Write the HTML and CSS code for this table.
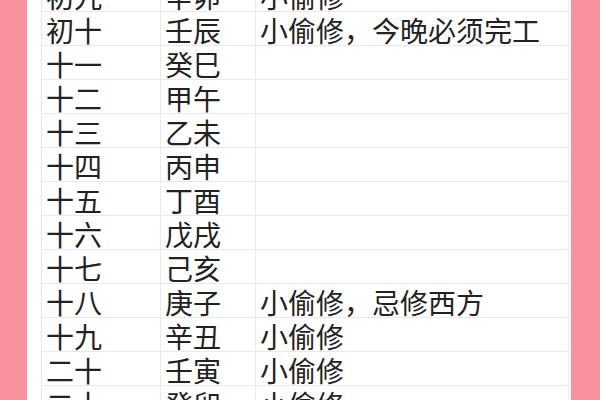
FILE: index.html
```html
<!DOCTYPE html>
<html lang="zh">
<head>
<meta charset="utf-8">
<link rel="stylesheet" href="styles.css">
</head>
<body>
<div class="page">
  <div class="sheet">
    <table class="grid">
      <colgroup><col class="c1"><col class="c2"><col class="c3"></colgroup>
      <tr><td>初九</td><td>辛卯</td><td>小偷修</td></tr>
      <tr><td>初十</td><td>壬辰</td><td>小偷修，今晚必须完工</td></tr>
      <tr><td>十一</td><td>癸巳</td><td></td></tr>
      <tr><td>十二</td><td>甲午</td><td></td></tr>
      <tr><td>十三</td><td>乙未</td><td></td></tr>
      <tr><td>十四</td><td>丙申</td><td></td></tr>
      <tr><td>十五</td><td>丁酉</td><td></td></tr>
      <tr><td>十六</td><td>戊戌</td><td></td></tr>
      <tr><td>十七</td><td>己亥</td><td></td></tr>
      <tr><td>十八</td><td>庚子</td><td>小偷修，忌修西方</td></tr>
      <tr><td>十九</td><td>辛丑</td><td>小偷修</td></tr>
      <tr><td>二十</td><td>壬寅</td><td>小偷修</td></tr>
      <tr><td>二十一</td><td>癸卯</td><td>小偷修</td></tr>
    </table>
  </div>
</div>
</body>
</html>
```

FILE: styles.css
```css
html, body {
  margin: 0;
  padding: 0;
  width: 600px;
  height: 400px;
  overflow: hidden;
  background: #f8929f;
}
.page {
  display: flex;
  justify-content: flex-start;
  height: 400px;
  padding-left: 27px;
}
.sheet {
  width: 544px;
  height: 400px;
  background: #ffffff;
  overflow: hidden;
  padding-left: 14px;
  padding-right: 3px;
  box-sizing: border-box;
}
.grid {
  margin-top: -23px;
  border-collapse: collapse;
  width: 527px;
  table-layout: fixed;
  font-family: "Noto Sans CJK SC", "Noto Sans", sans-serif;
  font-size: 28px;
  color: #222222;
}
.c1 { width: 119px; }
.c2 { width: 95px; }
.c3 { width: 313px; }
.grid td {
  height: 32.6px;
  padding: 0 0 0 4px;
  border: 1px solid #e9e9e9;
  line-height: 30px;
  white-space: nowrap;
  vertical-align: middle;
  padding-top: 3px;
  box-sizing: border-box;
}
.grid td:last-child {
  border-right: 1px solid #f0f0f0;
}
```
